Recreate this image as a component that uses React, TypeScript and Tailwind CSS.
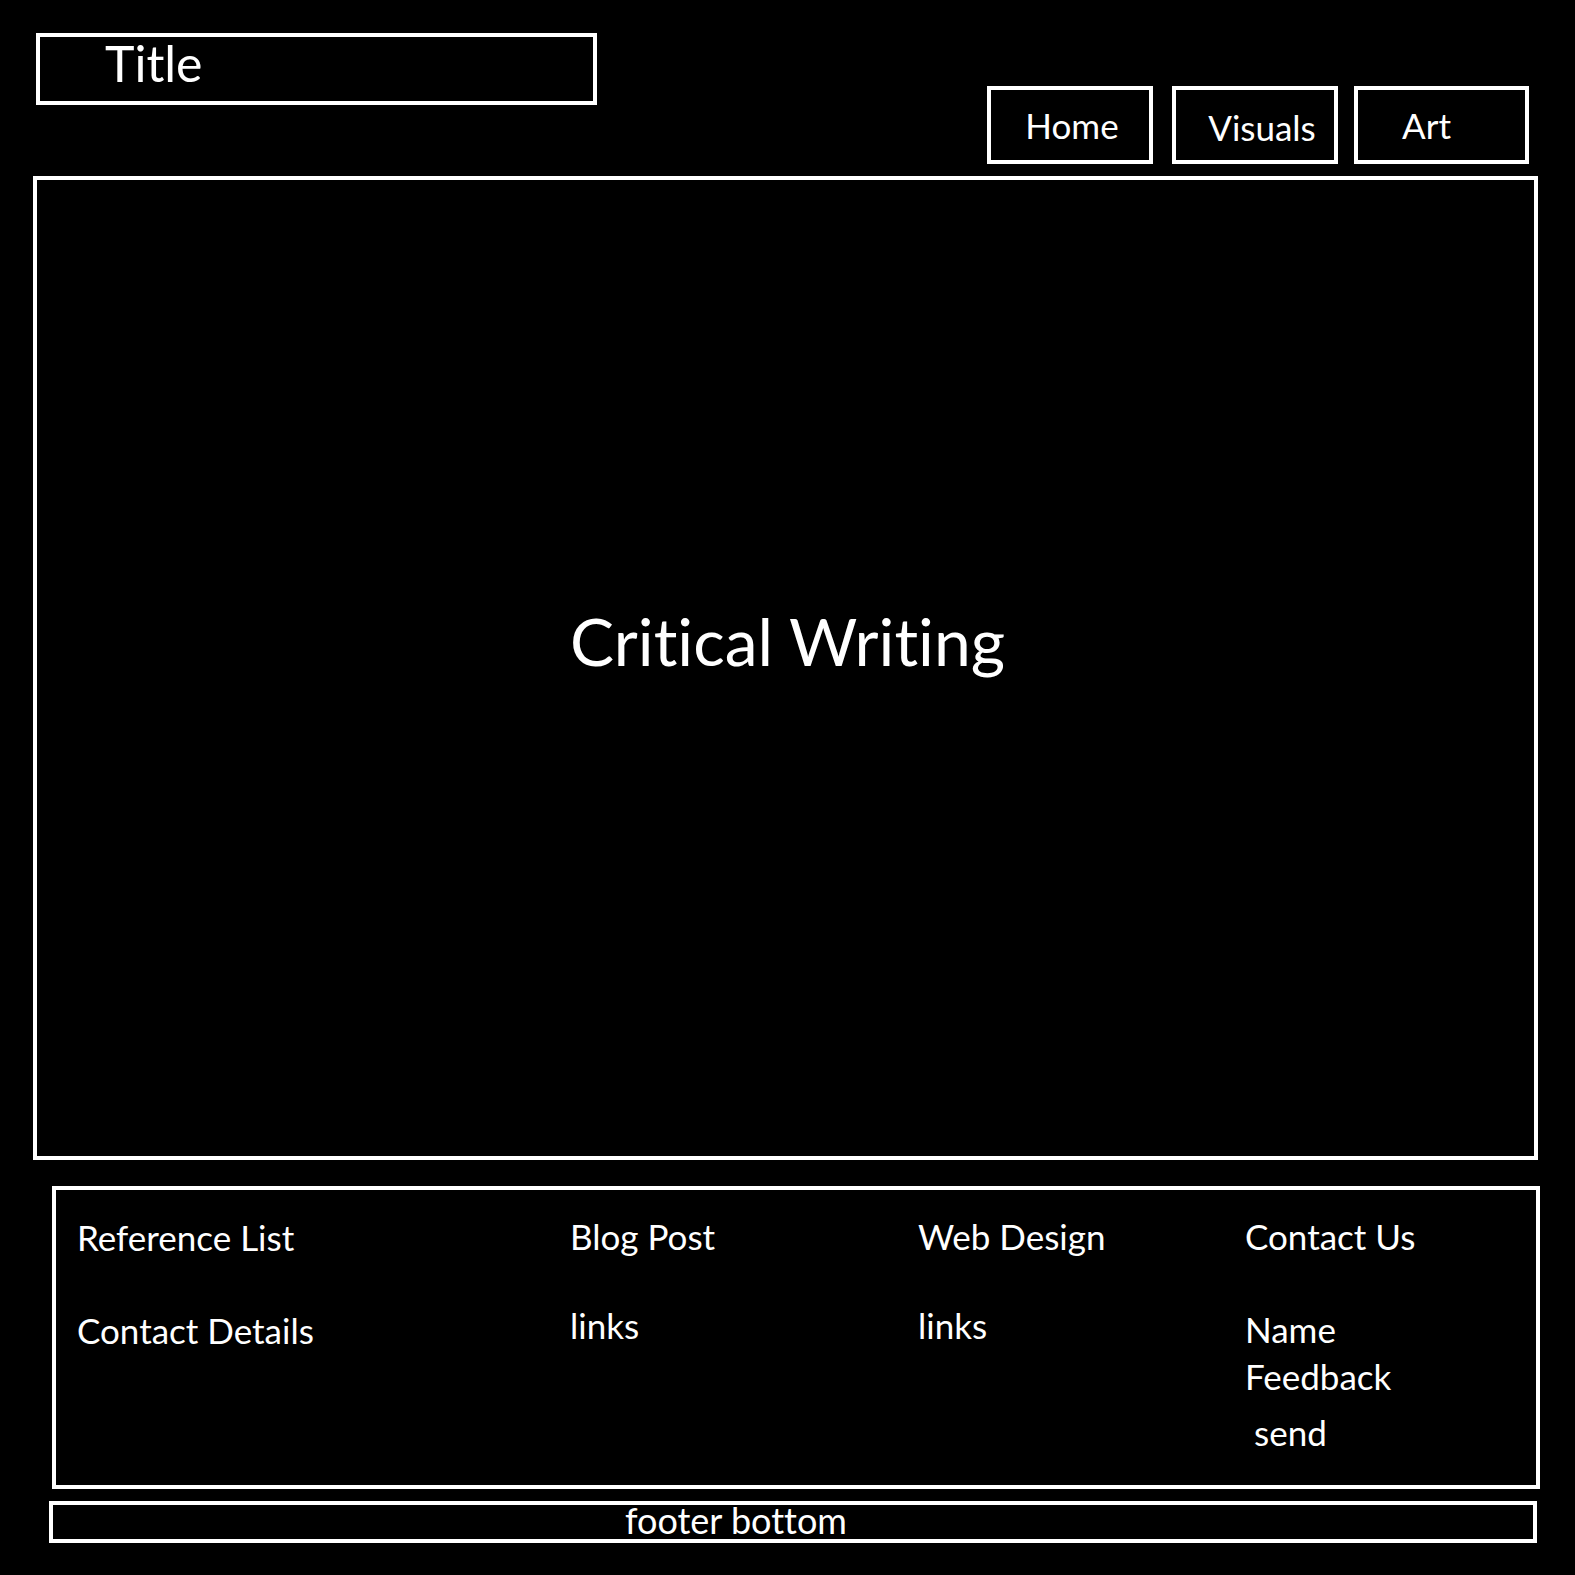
import React from 'react';

const font = { fontFamily: 'Lato, "Open Sans", sans-serif' };

const NavBox: React.FC<{ label: string; className?: string }> = ({ label, className }) => (
  <div className={`h-[78px] border-4 border-white flex items-center justify-center text-[35px] leading-[35px] text-white ${className ?? ''}`}>
    {label}
  </div>
);

export default function App() {
  return (
    <div className="w-[1575px] h-[1575px] bg-black text-white overflow-hidden [font-variant-ligatures:none]" style={font}>
      {/* header */}
      <header className="flex items-start justify-between pt-[33px] pl-[36px] pr-[46px]">
        <div className="w-[561px] h-[72px] border-4 border-white pl-[65px]">
          <span className="block text-[50px] leading-[50px] mt-[1px]">Title</span>
        </div>
        <nav className="flex mt-[53px]">
          <NavBox label="Home" className="w-[166px] pl-[4px]" />
          <NavBox label="Visuals" className="w-[166px] ml-[19px] pl-[14px] pt-[4px]" />
          <NavBox label="Art" className="w-[175px] ml-[16px] pr-[30px]" />
        </nav>
      </header>

      {/* main panel */}
      <main className="mt-[12px] ml-[33px] w-[1505px] h-[984px] border-4 border-white flex items-center justify-center pb-[54px] pl-[4px]">
        <h1 className="text-[66px] leading-[66px] font-normal">Critical Writing</h1>
      </main>

      {/* footer links */}
      <footer className="mt-[26px] ml-[52px] w-[1488px] h-[303px] border-4 border-white pt-[27px] pl-[21px] text-[35px] leading-[40px]">
        <div className="grid grid-cols-[493px_348px_327px_1fr]">
          <div className="flex flex-col gap-[53px]">
            <span>Reference List</span>
            <span>Contact Details</span>
          </div>
          <div className="flex flex-col gap-[53px] -mt-[1px]">
            <span>Blog Post</span>
            <span className="-mt-[4px]">links</span>
          </div>
          <div className="flex flex-col gap-[53px] -mt-[1px]">
            <span>Web Design</span>
            <span className="-mt-[4px]">links</span>
          </div>
          <div className="flex flex-col -mt-[1px]">
            <span>Contact Us</span>
            <span className="mt-[53px]">Name</span>
            <span className="mt-[7px]">Feedback</span>
            <span className="mt-[16px] ml-[9px]">send</span>
          </div>
        </div>
      </footer>

      <div className="mt-[12px] ml-[49px] w-[1488px] h-[42px] border-4 border-white pl-[572px]">
        <span className="block text-[36px] leading-[36px] -mt-[3px]">footer bottom</span>
      </div>
    </div>
  );
}
